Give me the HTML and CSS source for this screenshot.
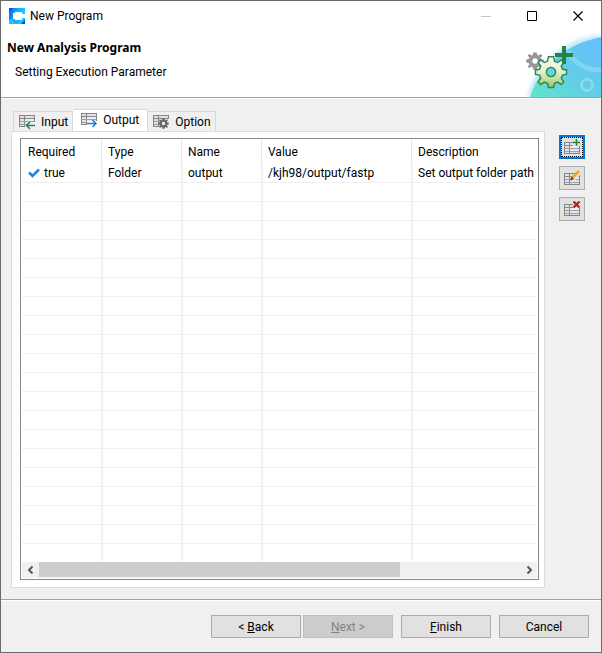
FILE: index.html
```html
<!DOCTYPE html>
<html lang="en">
<head>
<meta charset="utf-8">
<title>New Program</title>
<link rel="stylesheet" href="styles.css">
</head>
<body>
<svg class="defs" aria-hidden="true">
  <defs>
    <linearGradient id="sheet" x1="0" y1="0" x2="0" y2="1">
      <stop offset="0" stop-color="#fff"/><stop offset="1" stop-color="#cfdcf0"/>
    </linearGradient>
    <symbol id="grid" viewBox="0 0 16 16">
      <path fill="url(#sheet)" d="M0 1h16v12H0z"/>
      <path fill="#e2e2e2" d="M1 2h14v2H1zM1 4h4v9H1z"/>
      <path fill="#868686" d="M0 1h16v1H0zM0 2h1v11H0zM5 2h1v11H5zM15 2h1v11h-1zM0 4h16v1H0zM0 12h16v1H0z"/>
      <path fill="#a0a0a0" d="M1 7h14v1H1zM1 10h14v1H1z"/>
    </symbol>
    <symbol id="cog" viewBox="-10 -10 20 20">
      <path d="M-2-9.500h4l.5 2.800 1.500.7L6.400-7.800 8.200-6 6.200-3.600l.8 1.600 2.700.3v3.400l-2.700.5-.8 1.700L8.200 6.100 6.300 8 4 6.200l-1.500.7-.5 2.800h-4l-.5-2.800L-4 6.200-6.300 8l-1.900-1.900 2-2.300L-7 2.100l-2.700-.5v-3.300l2.700-.4.800-1.600-2-2.400 1.800-1.800L-4-6l1.500-.7zM0-3A3 3 0 1 0 0 3 3 3 0 1 0 0-3z" fill-rule="evenodd"/>
    </symbol>
  </defs>
</svg>
<div class="window">
  <header class="titlebar">
    <svg class="logo" viewBox="0 0 16 16" aria-hidden="true">
      <defs><linearGradient id="lg" x1="0" y1="0" x2="1" y2="0.3"><stop offset="0" stop-color="#0a62ee"/><stop offset="0.5" stop-color="#16a5f5"/><stop offset="1" stop-color="#12d5ff"/></linearGradient></defs>
      <path fill="url(#lg)" d="M0 0h16v6h-3V4H6v1H4v6h2v1h7v-2h3v6H0z"/>
      <path fill="#0755d8" d="M0 0h4l-4 5zM12 16l4-5v5z"/>
      <path fill="#23c4fa" d="M0 12l4-1 2 5H0z"/>
    </svg>
    <h1 class="title">New Program</h1>
    <div class="controls">
      <button type="button" class="control" aria-label="Minimize" disabled><svg viewBox="0 0 11 11"><path d="M0 5.500h10" stroke="#c8c8c8" fill="none"/></svg></button>
      <button type="button" class="control" aria-label="Maximize"><svg viewBox="0 0 11 11"><path d="M.5 .5h9v9h-9z" stroke="#000" fill="none"/></svg></button>
      <button type="button" class="control" aria-label="Close"><svg viewBox="0 0 11 11"><path d="M.5 .5l9 9M9.500 .5l-9 9" stroke="#000" stroke-width="1.200" fill="none"/></svg></button>
    </div>
  </header>
  <section class="banner">
    <div class="banner-text">
      <h2>New Analysis Program</h2>
      <p>Setting Execution Parameter</p>
    </div>
    <svg class="banner-art" viewBox="0 0 78 66" aria-hidden="true">
      <defs>
        <linearGradient id="sky" x1="0" y1="1" x2="1" y2="0"><stop offset="0" stop-color="#62e5c9"/><stop offset="0.5" stop-color="#62cce9"/><stop offset="1" stop-color="#69bdfc"/></linearGradient>
        <linearGradient id="leaf" x1="0" y1="0" x2="0" y2="1"><stop offset="0" stop-color="#fbfdf5"/><stop offset="0.5" stop-color="#e3efcc"/><stop offset="1" stop-color="#9cc665"/></linearGradient>
        <filter id="soft" x="-20%" y="-20%" width="140%" height="140%"><feGaussianBlur stdDeviation="2"/></filter>
      </defs>
      <path d="M4 66C12 36 38 7 78 4v62z" fill="#9fddf7" opacity=".65" filter="url(#soft)"/>
      <path d="M7 66C16 38 39 14 78 6v60z" fill="url(#sky)"/>
      <path d="M45 20C51 32 64 40 78 39" fill="none" stroke="#fff" stroke-opacity=".2" stroke-width="5"/>
      <circle cx="64" cy="54" r="5.500" fill="none" stroke="#fff" stroke-opacity=".25" stroke-width="3"/>
      <use href="#cog" x="3" y="21" width="18" height="18" fill="#979797"/>
      <g transform="translate(28 41) scale(1.600)">
        <path d="M-1.600-9.500h3.200l.6 2.800 2 .8L6.500-7.500 8-6 6.400-3.700l.8 2 2.500.4v2.800l-2.500.4-.8 2L8 6.200 6.400 7.800 4.200 6.300l-2 .8-.6 2.600h-3.200l-.6-2.600-2-.8-2.200 1.500L-8 6.200l1.600-2.300-.8-2-2.500-.4v-2.800l2.500-.4.8-2L-8-6l1.500-1.500 2.300 1.600 2-.8zM0-2.900A2.900 2.900 0 1 0 0 2.900 2.900 2.900 0 1 0 0-2.900z" fill="url(#leaf)" fill-rule="evenodd" stroke="#2b8a50" stroke-width=".9"/>
      </g>
      <path d="M39 15h4v7h7v4h-7v7h-4v-7h-7v-4h7z" fill="#218348"/>
    </svg>
  </section>
  <main class="content">
    <div class="tab-folder">
      <div class="tabs" role="tablist">
        <button type="button" role="tab" class="tab" aria-selected="false"><svg class="icon" viewBox="0 0 16 16"><use href="#grid"/><path d="M6 12l4-4h6v5H6z" fill="#f0f0f0"/><path d="M16 11.500H7M11 8l-3.500 3.500L11 15" stroke="#208b45" stroke-width="1.500" fill="none"/></svg>Input</button>
        <button type="button" role="tab" class="tab selected" aria-selected="true"><svg class="icon" viewBox="0 0 16 16"><use href="#grid"/><path d="M6 9h10v5H6z" fill="#fff"/><path d="M6 11.500h9M11.500 8l3.500 3.500-3.500 3.500" stroke="#1c7cdb" stroke-width="1.500" fill="none"/></svg>Output</button>
        <button type="button" role="tab" class="tab" aria-selected="false"><svg class="icon" viewBox="0 0 16 16"><use href="#grid"/><path d="M6 8l3-3h7v9H6z" fill="#f0f0f0"/><use href="#cog" x="5" y="4" width="11" height="11" fill="#696969"/></svg>Option</button>
      </div>
      <div class="panel" role="tabpanel">
        <div class="viewer">
          <div class="viewport">
            <table>
              <colgroup><col class="c-first"><col class="c-short"><col class="c-short"><col class="c-value"><col></colgroup>
              <thead><tr><th>Required</th><th>Type</th><th>Name</th><th>Value</th><th>Description</th></tr></thead>
              <tbody>
                <tr><td><svg class="check" viewBox="0 0 12 12" aria-hidden="true"><path d="M1 5.500l3.500 3.500L11 2.500" stroke="#2583dc" stroke-width="2.500" fill="none"/></svg>true</td><td>Folder</td><td>output</td><td>/kjh98/output/fastp</td><td>Set output folder path</td></tr>
                <tr><td></td><td></td><td></td><td></td><td></td></tr>
                <tr><td></td><td></td><td></td><td></td><td></td></tr>
                <tr><td></td><td></td><td></td><td></td><td></td></tr>
                <tr><td></td><td></td><td></td><td></td><td></td></tr>
                <tr><td></td><td></td><td></td><td></td><td></td></tr>
                <tr><td></td><td></td><td></td><td></td><td></td></tr>
                <tr><td></td><td></td><td></td><td></td><td></td></tr>
                <tr><td></td><td></td><td></td><td></td><td></td></tr>
                <tr><td></td><td></td><td></td><td></td><td></td></tr>
                <tr><td></td><td></td><td></td><td></td><td></td></tr>
                <tr><td></td><td></td><td></td><td></td><td></td></tr>
                <tr><td></td><td></td><td></td><td></td><td></td></tr>
                <tr><td></td><td></td><td></td><td></td><td></td></tr>
                <tr><td></td><td></td><td></td><td></td><td></td></tr>
                <tr><td></td><td></td><td></td><td></td><td></td></tr>
                <tr><td></td><td></td><td></td><td></td><td></td></tr>
                <tr><td></td><td></td><td></td><td></td><td></td></tr>
                <tr><td></td><td></td><td></td><td></td><td></td></tr>
                <tr><td></td><td></td><td></td><td></td><td></td></tr>
                <tr class="last"><td></td><td></td><td></td><td></td><td></td></tr>
              </tbody>
            </table>
          </div>
          <div class="scrollbar">
            <button type="button" aria-label="Scroll left"><svg viewBox="0 0 8 8"><path d="M5.500 .5L2 4l3.500 3.500" stroke="#555" stroke-width="2" fill="none"/></svg></button>
            <div class="track"><div class="thumb"></div></div>
            <button type="button" aria-label="Scroll right"><svg viewBox="0 0 8 8"><path d="M2.500 .5L6 4L2.500 7.500" stroke="#555" stroke-width="2" fill="none"/></svg></button>
          </div>
        </div>
      </div>
    </div>
    <div class="tools">
      <button type="button" class="tool focused" aria-label="Add"><svg class="icon" viewBox="0 0 16 16"><use href="#grid" y="2"/><path d="M9 1h7v6H9z" fill="#e1e1e1"/><path d="M12.500 0v7M9 3.500h7" stroke="#208b45" stroke-width="1.500"/></svg></button>
      <button type="button" class="tool" aria-label="Edit"><svg class="icon" viewBox="0 0 16 16"><use href="#grid" y="2"/><path d="M7 8l6-6h3v3l-6 6z" fill="#e1e1e1"/><path d="M8.500 7.500L15 1" stroke="#f5a31a" stroke-width="2.500"/><path d="M6 10.500l1.500-4 2.500 2.500z" fill="#3d3d3d"/></svg></button>
      <button type="button" class="tool" aria-label="Delete"><svg class="icon" viewBox="0 0 16 16"><use href="#grid" y="2"/><path d="M9 1h7v6H9z" fill="#e1e1e1"/><path d="M9.500 .5l6 6M15.500 .5l-6 6" stroke="#c01717" stroke-width="2.200"/></svg></button>
    </div>
  </main>
  <footer class="actions">
    <div class="pair">
      <button type="button" class="action">&lt; <u>B</u>ack</button>
      <button type="button" class="action" disabled><u>N</u>ext &gt;</button>
    </div>
    <button type="button" class="action"><u>F</u>inish</button>
    <button type="button" class="action">Cancel</button>
  </footer>
</div>
</body>
</html>
```
FILE: styles.css
```css
* { box-sizing: border-box; }

body {
  margin: 0;
  font: 12px/18px Roboto, "Noto Sans", sans-serif;
  color: #000;
}

button {
  font: inherit;
  color: inherit;
  padding: 0;
  border: 0;
  background: none;
}

svg { display: block; flex: none; }
.defs { position: absolute; width: 0; height: 0; }
.icon { width: 16px; height: 16px; }

.window {
  display: flex;
  flex-direction: column;
  min-height: 100vh;
  border: 1px solid #6b6b6b;
  background: #f0f0f0;
}

.titlebar {
  display: flex;
  align-items: center;
  height: 30px;
  padding-left: 8px;
  background: #fff;
}
.logo { width: 16px; height: 16px; }
.title { margin: 0 auto 0 5px; font-size: 12px; font-weight: 400; }
.controls { display: flex; align-self: stretch; }
.control { width: 46px; display: grid; place-items: center; }
.control svg { width: 11px; height: 11px; }

.banner {
  display: flex;
  justify-content: space-between;
  height: 67px;
  background: #fff;
  border-bottom: 1px solid #a0a0a0;
}
.banner-text { padding: 8px 0 0 6px; }
.banner h2 { margin: 0; font: bold 12px/18px "Noto Sans", sans-serif; }
.banner p { margin: 6px 0 0 8px; }
.banner-art { width: 78px; height: 66px; }

.content {
  flex: 1;
  display: flex;
  gap: 14px;
  padding: 10px 16px 11px 10px;
  border-top: 1px solid #fff;
}
.tab-folder { flex: 1; min-width: 0; display: flex; flex-direction: column; }
.tabs { display: flex; align-items: flex-end; padding-left: 2px; height: 22px; }
.tab {
  display: flex;
  align-items: center;
  gap: 6px;
  height: 20px;
  padding: 0 4px 0 5px;
  border: 1px solid #d9d9d9;
  border-bottom: 0;
}
.tab + .tab { border-left: 0; }
.tab.selected {
  height: 23px;
  margin-bottom: -1px;
  padding: 0 8px 3px;
  background: #fff;
}
.panel {
  flex: 1;
  display: flex;
  padding: 6px 5px 7px 8px;
  border: 1px solid #dcdcdc;
  background: #fff;
}
.viewer {
  flex: 1;
  min-width: 0;
  display: flex;
  flex-direction: column;
  padding: 1px;
  border: 1px solid #828790;
}
.viewport { flex: 1; overflow: hidden; }

table { width: 100%; table-layout: fixed; border-collapse: separate; border-spacing: 0; }
.c-first { width: 81px; }
.c-short { width: 80px; }
.c-value { width: 150px; }
th, td { padding: 0 0 0 5px; text-align: left; white-space: nowrap; overflow: hidden; }
th:first-child, td:first-child { padding-left: 6px; }
th {
  height: 24px;
  font-weight: 400;
  background: linear-gradient(#e5e5e5, #e5e5e5) right 1px top / 1px 100% no-repeat;
}
td { height: 19px; border-right: 2px solid #edf1f8; border-bottom: 1px solid #f0f0f0; }
th:last-child { background: none; }
td:last-child { border-right: 0; }
.last td { height: 17px; border-bottom: 0; }
.check { display: inline-block; width: 12px; height: 12px; margin-right: 4px; vertical-align: -2px; }

.scrollbar { display: flex; height: 16px; background: #f0f0f0; }
.scrollbar button { width: 17px; display: grid; place-items: center; }
.scrollbar svg { width: 8px; height: 8px; }
.track { flex: 1; }
.thumb { width: 75%; height: 15px; background: #cdcdcd; }

.tools { display: flex; flex-direction: column; gap: 7px; padding-top: 26px; }
.tool {
  display: grid;
  place-items: center;
  width: 26px;
  height: 24px;
  border: 1px solid #adadad;
  background: #e1e1e1;
}
.tool.focused { border: 2px solid #0078d7; outline: 1px dotted #000; outline-offset: -3px; }

.actions {
  display: flex;
  justify-content: flex-end;
  gap: 8px;
  padding: 15px 12px 14px;
  border-top: 1px solid #a0a0a0;
  box-shadow: inset 0 1px #fff;
}
.pair { display: flex; gap: 2px; }
.action { width: 90px; height: 23px; border: 1px solid #adadad; background: #e1e1e1; }
.action:disabled { border-color: #bfbfbf; background: #ccc; color: #838383; }
```
